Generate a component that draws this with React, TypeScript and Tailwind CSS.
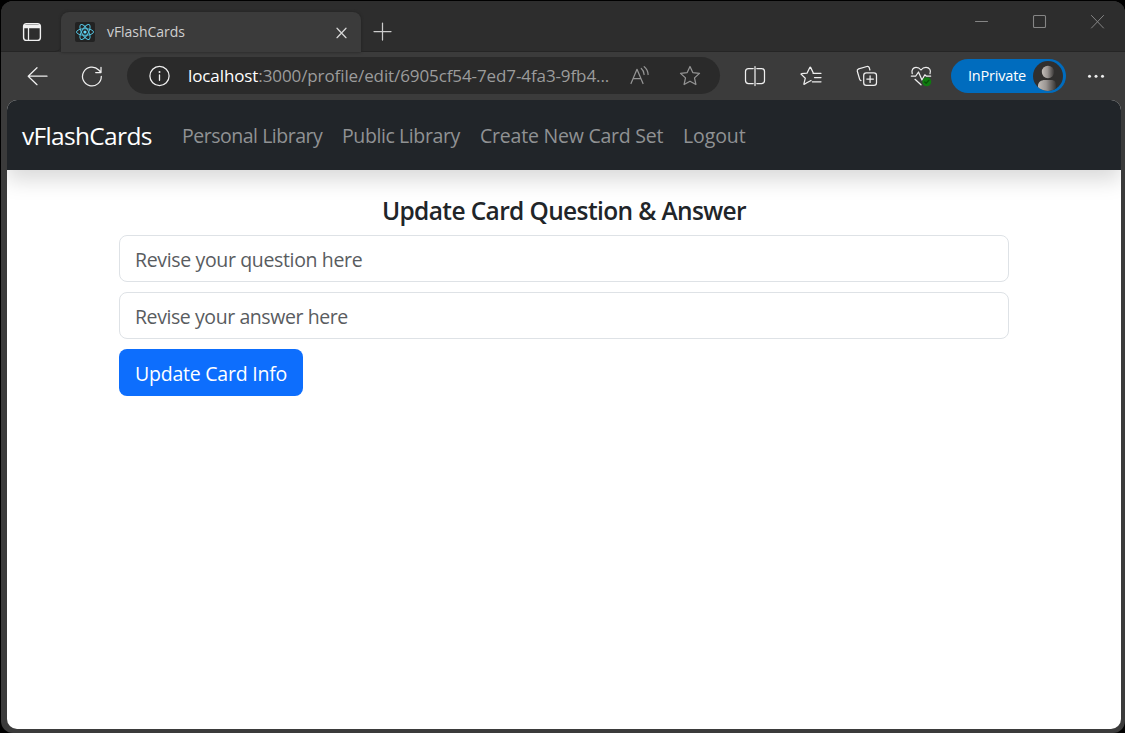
import type { ReactNode } from 'react';

function Icon({ children, className }: { children: ReactNode; className: string }) {
  return (
    <svg
      viewBox="0 0 22 22"
      className={`h-[22px] w-[22px] shrink-0 ${className}`}
      fill="none"
      stroke="currentColor"
      strokeWidth="1.25"
      strokeLinecap="round"
      strokeLinejoin="round"
    >
      {children}
    </svg>
  );
}

const STAR = 'M11 1.5l2.8 6.1 6.7.8-5 4.5 1.4 6.6-5.9-3.3-5.9 3.3 1.4-6.6-5-4.5 6.7-.8z';

function ReactLogo() {
  return (
    <svg viewBox="0 0 20 20" className="h-5 w-5 shrink-0" fill="none" stroke="#53c1de" strokeWidth="1">
      <rect width="20" height="20" rx="2" fill="#222222" stroke="none" />
      <ellipse cx="10" cy="10" rx="8.5" ry="3.3" />
      <ellipse cx="10" cy="10" rx="8.5" ry="3.3" transform="rotate(60 10 10)" />
      <ellipse cx="10" cy="10" rx="8.5" ry="3.3" transform="rotate(120 10 10)" />
      <circle cx="10" cy="10" r="1.6" fill="#61dafb" stroke="none" />
    </svg>
  );
}

function TabStrip() {
  return (
    <div className="flex h-[51px] bg-[#2d2d2d]">
      <div className="flex h-[51px] w-[60px] items-center rounded-br-md border-b border-[#252525] pt-3 pl-5">
        <Icon className="text-[#f0f0f0]">
          <rect x="2.6" y="2.6" width="16.8" height="16.8" rx="3" strokeWidth="1.4" />
          <path d="M3 3.5h16v3.8H3z" fill="currentColor" stroke="none" />
          <path d="M7.5 7v12" />
        </Icon>
      </div>
      <div className="mt-[11px] flex h-10 w-[300px] items-center rounded-t-lg bg-[#3b3b3b] pl-3.5 shadow-[0_0_3px_#202020]">
        <ReactLogo />
        <span className="ml-3 w-[223px] pb-0.5 text-[14px] tracking-[-0.05px] whitespace-nowrap text-[#cfcfcf]">vFlashCards</span>
        <Icon className="mt-px text-[#d8d8d8]">
          <path d="M7 6.2l9 9.5M16 6.2l-9 9.5" />
        </Icon>
      </div>
      <div className="flex flex-1 border-b border-[#252525]">
        <Icon className="mt-5 ml-[11px] text-[#cccccc]">
          <path d="M10.5 2v17M2 10.5h17" />
        </Icon>
        <div className="mt-[9px] ml-auto flex gap-9 pr-4 text-[#858585]">
          <Icon className="">
            <path d="M4.5 11.5h12" strokeWidth="1" />
          </Icon>
          <Icon className="">
            <rect x="4.5" y="5.5" width="12" height="12" rx="1" strokeWidth="1.1" />
          </Icon>
          <Icon className="">
            <path d="M4.5 5.5l12 12.5M16.5 5.5L4.5 18" strokeWidth="1" />
          </Icon>
        </div>
      </div>
    </div>
  );
}

function AddressBar() {
  return (
    <div className="ml-6 flex h-[37px] w-[593px] items-center rounded-full bg-[#2a2a2a] pl-[21px]">
      <Icon className="text-[#eeeeee]">
        <circle cx="11.5" cy="11" r="9.6" />
        <path d="M11.5 10v5.3" strokeWidth="1.3" />
        <circle cx="11.5" cy="7" r="1" fill="currentColor" stroke="none" />
      </Icon>
      <span className="ml-[18px] w-[441px] text-[17px] tracking-[-0.1px] whitespace-nowrap text-[#9c9c9c]">
        <span className="text-white">localhost</span>:3000/profile/edit/6905cf54-7ed7-4fa3-9fb4...
      </span>
      <Icon className="text-[#949494]">
        <path d="M2 18.5L8 4.3l6 14.2M4 13.5h8M12.3 3.5c1.8 1.5 2.7 3.5 2.8 6M15.2 1.7c2.5 2 3.8 4.6 3.9 7.8" />
      </Icon>
      <Icon className="ml-7 text-[#949494]">
        <path d={STAR} />
      </Icon>
    </div>
  );
}

function Toolbar() {
  return (
    <div className="flex h-12 items-center bg-[#3b3b3b] pb-px pl-[25px] text-[#eeeeee]">
      <Icon className="">
        <path d="M21 11.2H2.2M11 2.7l-8.8 8.5 8.8 8.5" />
      </Icon>
      <Icon className="ml-[33px]">
        <path d="M20.3 11.3A9.4 9.4 0 1 1 17.7 5l2.2 2.3M20 2.3v5.2h-5.3" />
      </Icon>
      <AddressBar />
      <Icon className="ml-6">
        <path d="M9.2 3.5H4.5a3 3 0 0 0-3 3v9a3 3 0 0 0 3 3h4.7M12.8 3.5h4.7a3 3 0 0 1 3 3v9a3 3 0 0 1-3 3h-4.7M11 1.5v19" />
      </Icon>
      <Icon className="ml-[34px]">
        <path d="M6.4 18l-2 1.3c-.4.2-.6 0-.5-.5l1.4-5.6-4-3.8c-.4-.3-.2-.7.2-.7l5.5-.5 2.8-5.8c.2-.4.6-.4.8 0l2.7 5.7M13 8.3h8M14.5 12.5H21M12.3 16.8H21M6.4 18l4.6-2.5" />
      </Icon>
      <Icon className="ml-[34px]">
        <rect x="7.7" y="7.8" width="12.8" height="12.6" rx="2.6" />
        <path d="M14.1 10.8v6.6M10.8 14.1h6.6M5 15.6c-.8-.2-1.2-.7-1.4-1.5L1.3 6.3c-.3-1.2.2-2 1.3-2.4l8.3-2.4c1.2-.3 2 .2 2.4 1.3l.6 2.2" />
      </Icon>
      <Icon className="ml-8">
        <path d="M2.2 8.7C1.2 5.2 3.2 2.3 6 2.3c2.1 0 3.7.9 5 2.7 1.3-1.8 2.9-2.7 5-2.7 3.5 0 5.3 3.2 4 6.4M1.3 11h4.5L8.5 7l3.5 8 2.8-5.2 1.4 1.2h4.5M5 14.3l6 5.5" />
        <circle cx="16.8" cy="16.8" r="4.5" fill="#107c10" stroke="none" />
        <path d="M14.7 17l1.4 1.3 2.8-3" stroke="#0a4f0a" />
      </Icon>
      <div className="mt-px ml-[19px] flex h-[34px] w-[115px] items-center rounded-full bg-[#006cbe] pl-[17px]">
        <span className="w-[65px] pb-px text-[14.5px] tracking-[-0.2px] whitespace-nowrap text-white">InPrivate</span>
        <svg viewBox="0 0 30 30" className="h-[30px] w-[30px] shrink-0">
          <defs>
            <linearGradient id="avatar">
              <stop offset="0" stopColor="#c2bdb8" />
              <stop offset="0.45" stopColor="#9b9693" />
              <stop offset="1" stopColor="#383635" />
            </linearGradient>
            <clipPath id="disc">
              <circle cx="15" cy="15" r="15" />
            </clipPath>
          </defs>
          <g clipPath="url(#disc)">
            <rect width="30" height="30" fill="#302f2e" />
            <circle cx="15" cy="11" r="6.2" fill="url(#avatar)" />
            <path d="M5 29v-4c0-4 3-6 7-6h6c4 0 5 2 5 6v5H5z" fill="url(#avatar)" />
          </g>
        </svg>
      </div>
      <Icon className="ml-[19px]">
        <g fill="currentColor" stroke="none">
          <circle cx="4.5" cy="11.2" r="1.5" />
          <circle cx="11" cy="11.2" r="1.5" />
          <circle cx="17.5" cy="11.2" r="1.5" />
        </g>
      </Icon>
    </div>
  );
}

function Navbar() {
  return (
    <nav className="flex h-[70px] items-center bg-[#212529] pt-0.5 pl-[15px] text-[19.5px] whitespace-nowrap text-[#909294] shadow-[0_10px_20px_rgba(0,0,0,0.15)]">
      <a className="w-40 text-[24.5px] tracking-[-0.67px] text-white">vFlashCards</a>
      <a className="w-40 tracking-[-0.48px]">Personal Library</a>
      <a className="w-[138px] tracking-[-0.4px]">Public Library</a>
      <a className="w-[203px] tracking-[-0.22px]">Create New Card Set</a>
      <a className="tracking-[-0.1px]">Logout</a>
    </nav>
  );
}

function CardForm() {
  return (
    <form className="ml-28 flex w-[890px] flex-col gap-2.5 pt-[25px] text-[19.5px]">
      <h1 className="-mb-px h-[31px] text-center text-[24.5px] leading-[31px] font-semibold tracking-[-0.62px] whitespace-nowrap text-[#212529]">
        Update Card Question &amp; Answer
      </h1>
      <input
        className="h-[47px] rounded-lg border border-[#dee2e6] px-[15px] pt-px tracking-[-0.35px] outline-none placeholder:text-[#595c5f]"
        placeholder="Revise your question here"
      />
      <input
        className="h-[47px] rounded-lg border border-[#dee2e6] px-[15px] pt-px tracking-[-0.42px] outline-none placeholder:text-[#595c5f]"
        placeholder="Revise your answer here"
      />
      <button
        type="button"
        className="h-[47px] w-[184px] rounded-lg bg-[#0d6efd] pt-[3px] tracking-[-0.23px] whitespace-nowrap text-white"
      >
        Update Card Info
      </button>
    </form>
  );
}

export default function App() {
  return (
    <div className="h-[733px] w-[1125px] overflow-hidden bg-black pt-px pl-px font-['Open_Sans','Noto_Sans',sans-serif]">
      <div className="h-[732px] overflow-hidden rounded-xl bg-[#3b3b3b]">
        <TabStrip />
        <Toolbar />
        <main className="ml-1.5 h-[629px] w-[1114px] overflow-hidden rounded-[10px] bg-white">
          <Navbar />
          <CardForm />
        </main>
      </div>
    </div>
  );
}
